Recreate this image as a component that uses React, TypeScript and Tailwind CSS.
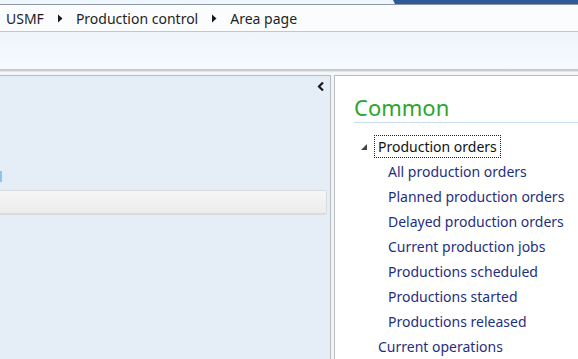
import { useState } from "react";

const items = [
  "All production orders",
  "Planned production orders",
  "Delayed production orders",
  "Current production jobs",
  "Productions scheduled",
  "Productions started",
  "Productions released",
];

function Crumb() {
  return (
    <svg width="6" height="9" viewBox="0 0 6 9">
      <path d="M1 0.5 L5.5 4.5 L1 8.5 Z" fill="#1a1a1a" />
    </svg>
  );
}

export default function App() {
  const [open] = useState(true);

  return (
    <div
      className="w-[578px] h-[359px] overflow-hidden flex flex-col bg-[#f3f6fa]"
      style={{ fontFamily: "'Segoe UI', 'Noto Sans', sans-serif" }}
    >
      {/* top window strip */}
      <div className="relative h-[5px] bg-[#eef5fc] border-b border-[#8d98a6]">
        <div className="absolute right-0 top-0 h-[4px] w-[185px] bg-[#2c5a9a] [clip-path:polygon(0_0,100%_0,100%_100%,2px_100%)]" />
      </div>

      {/* breadcrumb */}
      <div className="h-[27px] bg-[#fbfcfe] border-b border-[#c3c7cc] flex items-center pl-[6px] text-[14px] text-[#1e1e1e] gap-[13px]">
        <span>USMF</span>
        <Crumb />
        <span>Production control</span>
        <Crumb />
        <span>Area page</span>
      </div>

      {/* ribbon */}
      <div className="h-[39px] bg-gradient-to-b from-[#eef5fd] to-[#f7fafd] border-b-2 border-[#c6c9cd]" />

      {/* content */}
      <div className="flex-1 flex pt-[3px] bg-[#f4f6f8] border-t border-[#e2e5e9]">
        <div className="w-[331px] border-t border-r border-[#b9bdc2] bg-[#e5edf7] flex flex-col">
          <div className="flex justify-end pr-[5px] pt-[6px] h-[22px]">
            <svg width="8" height="9" viewBox="0 0 8 9">
              <path d="M6 0.5 L2 4.5 L6 8.5" stroke="#1a1a1a" strokeWidth="2.2" fill="none" />
            </svg>
          </div>
          <div className="h-[73px]" />
          <div className="w-[2px] h-[11px] bg-[#8cc6ee]" />
          <div className="h-[8px]" />
          <div className="w-[327px] h-[24px] rounded-r-[2px] border border-l-0 border-[#d9dcdf] bg-gradient-to-b from-[#f6f6f6] to-[#ececec] shadow-[0_1px_0_#d7dbe0]" />
        </div>
        <div className="w-[3px] bg-[#f3f4f5]" />
        <div className="flex-1 border-t border-l border-[#b9bdc2] bg-white pl-[19px]">
          <div className="pt-[17px] text-[22px] leading-[28px] text-[#2ea52b]">Common</div>
          <div className="mt-[1px] h-px bg-[#c9dcec]" />
          <div className="mt-[12px] flex items-center">
            <svg width="8" height="8" viewBox="0 0 8 8" className="ml-[6px] mr-[6px]">
              <path d="M7 1 L7 7 L1 7 Z" fill="#444" />
            </svg>
            <span className="border border-dotted border-[#222] px-[3px] h-[23px] flex items-center text-[14px] text-[#111]">
              Production orders
            </span>
          </div>
          {open && (
            <div className="flex flex-col pl-[34px] mt-[1px]">
              {items.map((t) => (
                <div key={t} className="h-[25px] flex items-center text-[14px] text-[#1f2f80] whitespace-nowrap">
                  {t}
                </div>
              ))}
            </div>
          )}
          <div className="pl-[24px] h-[25px] flex items-center text-[14px] text-[#1f2f80]">
            Current operations
          </div>
        </div>
      </div>
    </div>
  );
}
